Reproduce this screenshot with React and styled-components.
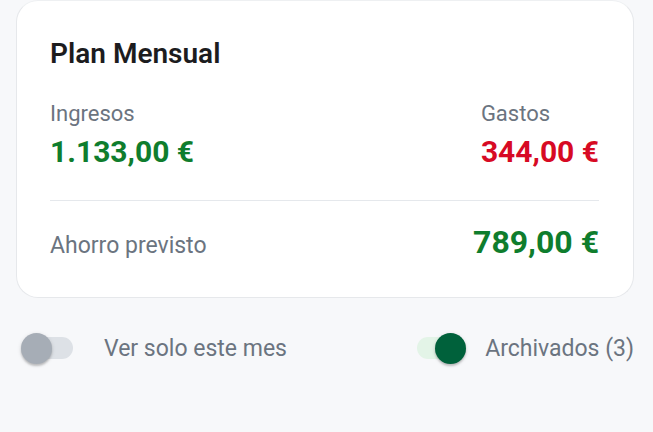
import React, { useState } from "react";
import styled, { createGlobalStyle } from "styled-components";

const Global = createGlobalStyle`
  html, body { margin: 0; padding: 0; background: #f7f8fa; }
  body { font-family: Roboto, "Noto Sans", sans-serif; -webkit-font-smoothing: antialiased; }
  * { box-sizing: border-box; }
`;

const Page = styled.div`
  width: 653px;
  height: 432px;
  padding: 0 19px 0 16px;
  background: #f7f8fa;
`;

const Card = styled.section`
  background: #ffffff;
  border: 1px solid #e6e8eb;
  border-top-color: #eef0f2;
  border-radius: 22px;
  padding: 37px 34px 36px 33px;
`;

const Title = styled.h2`
  margin: 0;
  font-size: 28px;
  line-height: 32px;
  font-weight: 600;
  color: #1c1c1e;
`;

const Columns = styled.div`
  display: flex;
  justify-content: space-between;
  margin-top: 31px;
`;

const Col = styled.div`
  display: flex;
  flex-direction: column;
  gap: 7px;
`;

const Label = styled.span`
  font-size: ${(p) => p.$size || 22}px;
  line-height: 26px;
  color: #6b7480;
`;

const Amount = styled.span`
  font-size: ${(p) => p.$size || 30}px;
  line-height: ${(p) => (p.$size || 30) + 6}px;
  font-weight: 700;
  color: ${(p) => (p.$tone === "neg" ? "#d70a24" : "#0f7d2d")};
`;

const Divider = styled.hr`
  border: 0;
  height: 1px;
  background: #e5e8ec;
  margin: 30px 0 0 0;
`;

const SavingsRow = styled.div`
  display: flex;
  justify-content: space-between;
  align-items: baseline;
  margin-top: 22px;
`;

const ToggleRow = styled.div`
  display: flex;
  justify-content: space-between;
  align-items: center;
  margin-top: 30px;
  height: 40px;
  padding: 0 0 0 6px;
`;

const ToggleGroup = styled.label`
  display: flex;
  align-items: center;
  gap: ${(p) => p.$gap}px;
  cursor: pointer;
`;

const Track = styled.span`
  position: relative;
  display: inline-block;
  width: 48px;
  height: 22px;
  border-radius: 11px;
  background: ${(p) => (p.$on ? "#e3f4e7" : "#dde1e6")};
  margin-left: 3px;
`;

const Thumb = styled.span`
  position: absolute;
  top: -4px;
  left: ${(p) => (p.$on ? "18px" : "-4px")};
  width: 31px;
  height: 31px;
  border-radius: 50%;
  background: ${(p) => (p.$on ? "#00613b" : "#a6adb6")};
  box-shadow: 0 2px 2px rgba(0, 0, 0, 0.18), 0 1px 4px rgba(0, 0, 0, 0.12);
`;

const ToggleText = styled.span`
  font-size: 23px;
  line-height: 26px;
  padding-top: 2px;
  color: #6b7480;
`;

function Toggle({ on, label, gap, onToggle }) {
  return (
    <ToggleGroup $gap={gap} onClick={onToggle}>
      <Track $on={on}>
        <Thumb $on={on} />
      </Track>
      <ToggleText>{label}</ToggleText>
    </ToggleGroup>
  );
}

export default function App() {
  const [month, setMonth] = useState(false);
  const [arch, setArch] = useState(true);
  return (
    <>
      <Global />
      <Page>
        <Card>
          <Title>Plan Mensual</Title>
          <Columns>
            <Col>
              <Label>Ingresos</Label>
              <Amount>1.133,00 €</Amount>
            </Col>
            <Col>
              <Label>Gastos</Label>
              <Amount $tone="neg">344,00 €</Amount>
            </Col>
          </Columns>
          <Divider />
          <SavingsRow>
            <Label $size={23}>Ahorro previsto</Label>
            <Amount $size={32}>789,00 €</Amount>
          </SavingsRow>
        </Card>
        <ToggleRow>
          <Toggle on={month} gap={31} label="Ver solo este mes" onToggle={() => setMonth(!month)} />
          <Toggle on={arch} gap={20} label="Archivados (3)" onToggle={() => setArch(!arch)} />
        </ToggleRow>
      </Page>
    </>
  );
}
